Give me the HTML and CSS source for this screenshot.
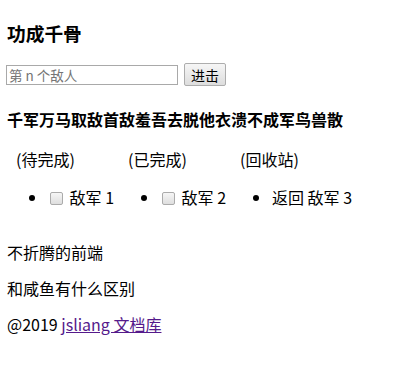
FILE: index.html
```html
<!DOCTYPE html>
<html lang="zh-CN">
<head>
    <meta charset="UTF-8">
    <meta name="viewport" content="width=device-width, initial-scale=1.0">
    <title>功成千骨</title>
    <link rel="stylesheet" href="styles.css">
</head>
<body>
    <h3 class="title">功成千骨</h3>

    <div class="attack">
        <input type="text" class="enemy-input" placeholder="第 n 个敌人">
        <button class="attack-btn">进击</button>
    </div>

    <h4 class="slogan">千军万马取敌首敌羞吾去脱他衣溃不成军鸟兽散</h4>

    <div class="board">
        <div class="column">
            <p class="column-title">(待完成)</p>
            <ul>
                <li><input type="checkbox" class="check"> 敌军 1</li>
            </ul>
        </div>
        <div class="column">
            <p class="column-title">(已完成)</p>
            <ul>
                <li><input type="checkbox" class="check"> 敌军 2</li>
            </ul>
        </div>
        <div class="column">
            <p class="column-title">(回收站)</p>
            <ul>
                <li><span>返回</span> 敌军 3</li>
            </ul>
        </div>
    </div>

    <p class="note">不折腾的前端</p>
    <p class="note">和咸鱼有什么区别</p>
    <p class="note">@2019 <a href="#" class="docs-link">jsliang 文档库</a></p>
</body>
</html>
```

FILE: styles.css
```css
body {
    font-family: "Noto Sans CJK SC", "Noto Sans", sans-serif;
    font-size: 16px;
    line-height: 21px;
    color: #000;
    background: #fff;
    margin: 0;
    padding: 8px 6px;
}
.title {
    font-size: 18.72px;
    line-height: 24px;
    margin: 13px 0 18px 1px;
}
.attack {
    display: flex;
    align-items: center;
    height: 23px;
}
.enemy-input {
    box-sizing: border-box;
    width: 172px;
    height: 20px;
    margin: 0 6px 0 0;
    padding: 0 2px;
    border: 1px solid #a9a9a9;
    font-family: inherit;
    font-size: 13.5px;
}
.enemy-input::placeholder {
    color: #757575;
}
.attack-btn {
    box-sizing: border-box;
    width: 42px;
    height: 23px;
    padding: 0;
    border: 1px solid #adadad;
    border-radius: 2px;
    background: linear-gradient(#f6f6f6, #dddddd);
    font-family: inherit;
    font-size: 14px;
    color: #000;
}
.slogan {
    font-size: 16px;
    margin: 23px 0 0 1px;
}
.board {
    display: flex;
    padding-left: 10px;
}
.column {
    width: 112px;
    flex-shrink: 0;
}
.column:last-child {
    width: auto;
}
.column-title {
    margin: 19px 0 0;
}
.board ul {
    margin: 17px 0 0;
    padding-left: 32px;
}
.board li {
    white-space: nowrap;
}
.check {
    appearance: none;
    width: 13px;
    height: 13px;
    margin: 0 3px 0 2px;
    vertical-align: -1px;
    border: 1px solid #ababab;
    border-radius: 2px;
    background: linear-gradient(#f6f6f6, #dedede);
}
.note {
    margin: 15px 0 0 1px;
}
.board + .note {
    margin-top: 34px;
}
.docs-link {
    color: #551a8b;
}
```
